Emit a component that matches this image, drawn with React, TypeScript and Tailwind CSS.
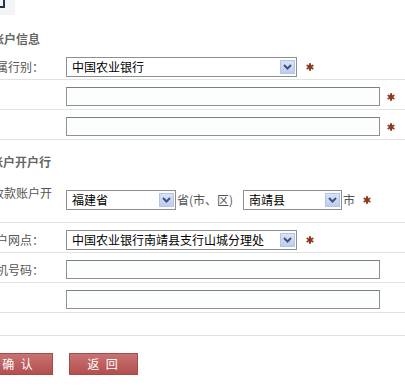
import type { ReactNode } from 'react'

const FONT = { fontFamily: '"Noto Sans CJK SC", "Noto Sans", sans-serif' }

function Star() {
  return (
    <svg width="8" height="8" viewBox="0 0 8 8" className="shrink-0">
      <g stroke="#8e3a1c" strokeWidth="2" strokeLinecap="round">
        <line x1="4" y1="1" x2="4" y2="7" />
        <line x1="1.4" y1="2.5" x2="6.6" y2="5.5" />
        <line x1="1.4" y1="5.5" x2="6.6" y2="2.5" />
      </g>
    </svg>
  )
}

function Select({ value, width }: { value: string; width: string }) {
  return (
    <div
      className={`flex h-[20px] shrink-0 items-center justify-between border border-[#8d8f92] bg-white pl-[5px] pr-[1px] ${width}`}
    >
      <span className="truncate text-[12px] leading-[14px] text-black">{value}</span>
      <span className="flex h-[14px] w-[15px] items-center justify-center border border-[#b3c5e6] bg-gradient-to-b from-[#d9e3f6] to-[#bccdee]">
        <svg width="9" height="6" viewBox="0 0 9 6">
          <path d="M1 1 L4.5 4.5 L8 1" fill="none" stroke="#3d5282" strokeWidth="2" />
        </svg>
      </span>
    </div>
  )
}

function TextInput() {
  return (
    <div className="h-[19px] w-[314px] shrink-0 border border-[#8f9294] border-t-[#7c7f82] bg-[#fcfdfd]" />
  )
}

function Row({ label, children, className }: { label?: string; children?: ReactNode; className: string }) {
  return (
    <div className={`flex border-b border-[#e1e2e3] ${className}`}>
      <div className="w-[82px] shrink-0 text-[12px] leading-[14px] text-[#555]">{label}</div>
      <div className="flex items-center gap-[7px]">{children}</div>
    </div>
  )
}

export default function App() {
  return (
    <div className="h-[390px] w-[405px] overflow-hidden bg-white" style={FONT}>
      <div className="h-[26px]">
        <div className="relative h-[15px] w-[15px] bg-[#f3f4f5]">
          <div className="absolute left-[3px] top-0 h-[8px] w-[2px] bg-[#22344f]" />
          <div className="absolute left-0 top-[6px] h-[2px] w-[5px] bg-[#22344f]" />
        </div>
      </div>

      <div className="-ml-4 w-[421px]">
        <div className="h-[27px] pl-[8px] pt-[7px] text-[12px] font-bold leading-[12px] text-[#666]">账户信息</div>

        <Row label="所属行别：" className="h-[27px] items-center pt-[2px]">
          <Select value="中国农业银行" width="w-[231px]" />
          <span className="ml-[2px]">
            <Star />
          </span>
        </Row>
        <Row className="h-[30px] items-center pt-[4px]">
          <TextInput />
          <Star />
        </Row>
        <Row className="h-[30px] items-center pt-[4px]">
          <TextInput />
          <Star />
        </Row>

        <div className="h-[38px] pl-[7px] pt-[16px] text-[12px] font-bold leading-[12px] text-[#666]">账户开户行</div>

        <div className="flex h-[45px] items-start border-b border-[#e1e2e3]">
          <div className="w-[82px] shrink-0 pl-[8px] pt-[8px] text-[12px] leading-[14px] text-[#555]">收款账户开</div>
          <div className="flex items-center pt-[12px] text-[12px] leading-[14px] text-[#555]">
            <Select value="福建省" width="w-[110px]" />
            <span className="ml-[1px] w-[66px]">省(市、区)</span>
            <Select value="南靖县" width="w-[99px]" />
            <span className="ml-[1px]">市</span>
            <span className="ml-[8px]">
              <Star />
            </span>
          </div>
        </div>

        <Row label="开户网点：" className="h-[30px] items-center pt-[4px]">
          <Select value="中国农业银行南靖县支行山城分理处" width="w-[231px]" />
          <span className="ml-[2px]">
            <Star />
          </span>
        </Row>
        <Row label="手机号码：" className="h-[30px] items-center pt-[4px]">
          <TextInput />
        </Row>
        <Row className="h-[30px] items-center pt-[4px]">
          <TextInput />
        </Row>
        <div className="h-[23px] border-b border-[#e1e2e3]" />

        <div className="mt-[17px] flex gap-[16px]">
          {['确 认', '返 回'].map((t) => (
            <button
              key={t}
              className="h-[22px] w-[69px] border border-[#a44c4c] bg-gradient-to-b from-[#c97272] to-[#b34f4f] text-[12px] leading-[20px] tracking-[2px] text-white"
            >
              {t}
            </button>
          ))}
        </div>
      </div>
    </div>
  )
}
